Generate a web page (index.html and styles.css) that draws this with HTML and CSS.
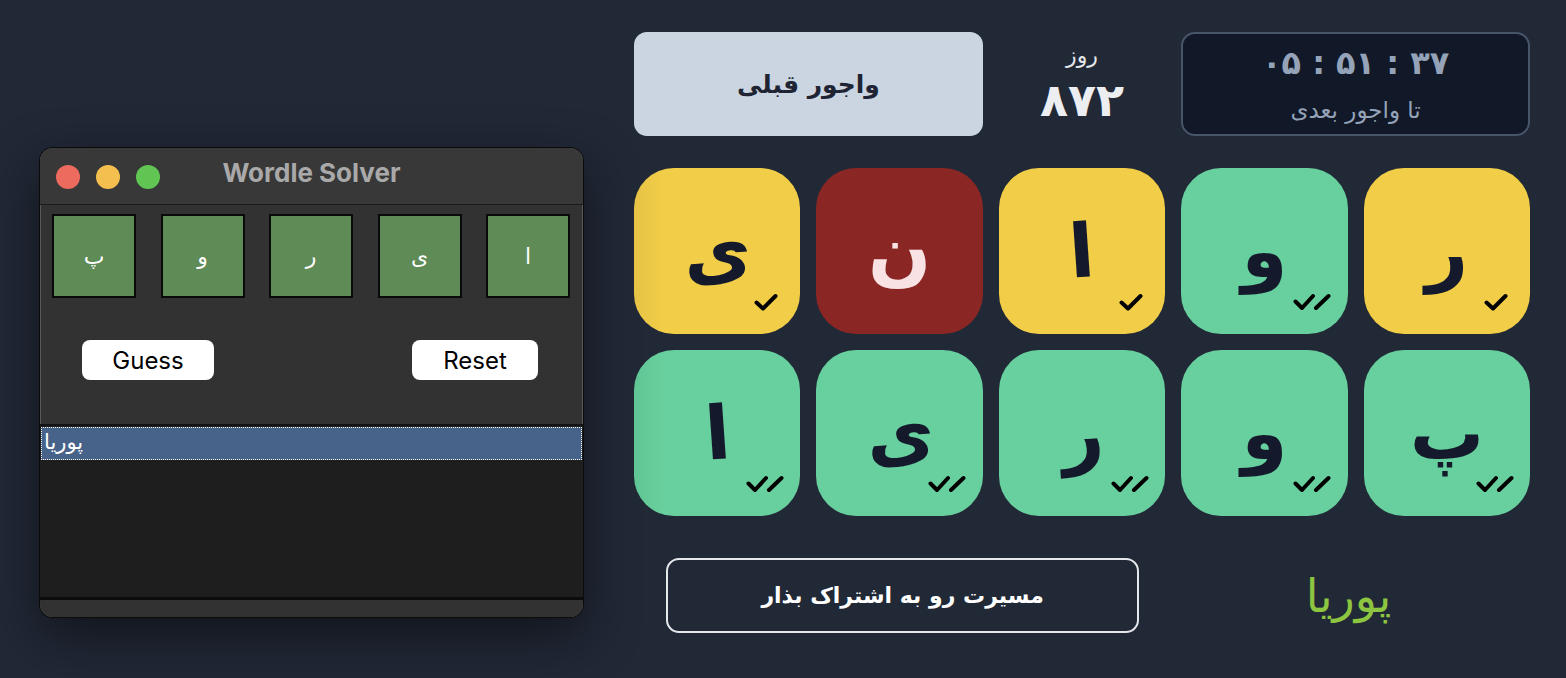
FILE: index.html
```html
<!DOCTYPE html>
<html lang="fa">
<head>
<meta charset="utf-8">
<title>Wordle Solver</title>
<link rel="stylesheet" href="styles.css">
</head>
<body>
<div class="stage">
  <div class="window">
    <div class="titlebar">
      <div class="lights">
        <span class="light red"></span>
        <span class="light yellow"></span>
        <span class="light green"></span>
      </div>
      <div class="wtitle">Wordle Solver</div>
      <div></div>
    </div>
    <div class="wbody">
      <div class="wtiles">
        <div class="wtile">پ</div>
        <div class="wtile">و</div>
        <div class="wtile">ر</div>
        <div class="wtile">ی</div>
        <div class="wtile">ا</div>
      </div>
      <div class="wbuttons">
        <button class="mbtn guess">Guess</button>
        <button class="mbtn reset">Reset</button>
      </div>
    </div>
    <div class="listbox">
      <div class="litem">پوریا</div>
    </div>
    <div class="wfoot"></div>
  </div>

  <div class="panel" dir="rtl">
    <div class="row5 top">
      <div class="timer">
        <div class="clock">۰۵ : ۵۱ : ۳۷</div>
        <div class="tnext">تا واجور بعدی</div>
      </div>
      <div class="day">
        <div class="dlabel">روز</div>
        <div class="dnum">۸۷۲</div>
      </div>
      <button class="prev">واجور قبلی</button>
    </div>

    <div class="board">
      <div class="tile y"><span class="ch">ر</span><svg class="chk one" viewBox="0 0 24 18"><path d="M2.5 9.5 L9 15.5 L21.5 3"/></svg></div>
      <div class="tile g"><span class="ch">و</span><svg class="chk two" viewBox="0 0 38 18"><path d="M2.5 8.5 L9 15 L20 3 M23 15 L35.5 3"/></svg></div>
      <div class="tile y"><span class="ch tilt">ا</span><svg class="chk one" viewBox="0 0 24 18"><path d="M2.5 9.5 L9 15.5 L21.5 3"/></svg></div>
      <div class="tile r"><span class="ch">ن</span></div>
      <div class="tile y flip"><span class="ch tilt">ی</span><svg class="chk one" viewBox="0 0 24 18"><path d="M2.5 9.5 L9 15.5 L21.5 3"/></svg></div>

      <div class="tile g"><span class="ch">پ</span><svg class="chk two" viewBox="0 0 38 18"><path d="M2.5 8.5 L9 15 L20 3 M23 15 L35.5 3"/></svg></div>
      <div class="tile g"><span class="ch">و</span><svg class="chk two" viewBox="0 0 38 18"><path d="M2.5 8.5 L9 15 L20 3 M23 15 L35.5 3"/></svg></div>
      <div class="tile g"><span class="ch tilt">ر</span><svg class="chk two" viewBox="0 0 38 18"><path d="M2.5 8.5 L9 15 L20 3 M23 15 L35.5 3"/></svg></div>
      <div class="tile g"><span class="ch tilt">ی</span><svg class="chk two" viewBox="0 0 38 18"><path d="M2.5 8.5 L9 15 L20 3 M23 15 L35.5 3"/></svg></div>
      <div class="tile g flip"><span class="ch tilt">ا</span><svg class="chk two" viewBox="0 0 38 18"><path d="M2.5 8.5 L9 15 L20 3 M23 15 L35.5 3"/></svg></div>
    </div>

    <div class="row5 bottom">
      <div class="name">پوریا</div>
      <div class="sharecell"><button class="share">مسیرت رو به اشتراک بذار</button></div>
    </div>
  </div>
</div>
</body>
</html>
```

FILE: styles.css
```css
* { box-sizing: border-box; }
html, body { margin: 0; padding: 0; }
body {
  background: #212836;
  width: 1566px;
  height: 678px;
  overflow: hidden;
  font-family: "DejaVu Sans", sans-serif;
}
.stage {
  display: flex;
  align-items: flex-start;
  padding-left: 40px;
  gap: 51px;
}

/* ---------- mac window ---------- */
.window {
  margin-top: 148px;
  width: 543px;
  height: 469px;
  border-radius: 13px;
  background: #323232;
  overflow: hidden;
  box-shadow: 0 0 0 1px #0b0b0b, inset 0 0 0 1px #5a5a5a, 0 18px 50px rgba(0,0,0,0.5);
  display: flex;
  flex-direction: column;
}
.titlebar {
  height: 57px;
  flex: none;
  background: #383838;
  border-bottom: 1px solid #1b1b1b;
  display: grid;
  grid-template-columns: 1fr auto 1fr;
  align-items: center;
}
.lights { display: flex; gap: 16px; padding-left: 16px; padding-top: 1px; }
.light { width: 24px; height: 24px; border-radius: 50%; display: block; }
.light.red { background: #ec6a5e; }
.light.yellow { background: #f4bf4f; }
.light.green { background: #61c554; }
.wtitle {
  font-family: "Inter", "Liberation Sans", sans-serif;
  font-weight: 700;
  font-size: 26px;
  color: #a9a9a9;
  margin-top: -7px;
}
.wbody { padding: 9px 13px 0 12px; flex: none; }
.wtiles { display: flex; justify-content: space-between; }
.wtile {
  width: 84px; height: 84px;
  background: #5e8b56;
  border: 2px solid #0a0a0a;
  display: flex; align-items: center; justify-content: center;
  color: #fff;
  font-size: 22px;
}
.wbuttons {
  display: flex;
  justify-content: space-between;
  padding: 0 32px 0 30px;
  margin-top: 42px;
  margin-bottom: 44px;
}
.mbtn {
  height: 40px;
  border: none;
  border-radius: 8px;
  background: #fff;
  color: #000;
  font-family: "Inter", "Liberation Sans", sans-serif;
  font-size: 24px;
  padding: 0;
}
.mbtn.guess { width: 132px; }
.mbtn.reset { width: 126px; }
.listbox {
  flex: 1;
  background: #1e1e1e;
  border-top: 2px solid #141414;
  border-bottom: 3px solid #0c0c0c;
  padding: 1px 1px 0 1px;
}
.litem {
  height: 33px;
  background: #486389;
  border: 1px dotted #ffffff;
  color: #fff;
  font-size: 21px;
  line-height: 28px;
  padding-left: 2px;
  direction: rtl;
  text-align: left;
}
.wfoot { height: 17px; flex: none; background: #323232; }

/* ---------- game panel ---------- */
.panel { width: 896px; margin-top: 32px; }
.row5 {
  display: grid;
  grid-template-columns: repeat(5, 1fr);
  gap: 16px;
}
.top { height: 104px; }
.timer {
  grid-column: span 2;
  background: #111827;
  border: 2px solid #475569;
  border-radius: 14px;
  display: flex;
  flex-direction: column;
  align-items: center;
  justify-content: center;
  color: #94a3b8;
}
.clock {
  direction: ltr;
  font-size: 32px;
  font-weight: 700;
  line-height: 40px;
}
.tnext { font-size: 23px; line-height: 30px; margin-top: 12px; }
.day {
  display: flex;
  flex-direction: column;
  align-items: center;
  justify-content: center;
  color: #e5e7eb;
}
.dlabel { font-size: 22px; line-height: 28px; margin-bottom: 4px; }
.dnum { font-size: 46px; font-weight: 700; line-height: 52px; color: #eceef2; }
.prev {
  grid-column: span 2;
  border: none;
  border-radius: 13px;
  background: #cbd5e1;
  color: #1e2433;
  font-family: "DejaVu Sans", sans-serif;
  font-size: 25px;
  font-weight: 700;
}

.board {
  margin-top: 32px;
  display: grid;
  grid-template-columns: repeat(5, 1fr);
  grid-auto-rows: 166px;
  gap: 16px;
}
.tile {
  position: relative;
  border-radius: 40px;
  display: flex;
  align-items: center;
  justify-content: center;
  color: #141a2c;
}
.tile.y { background: #f2ce48; }
.tile.g { background: #68d09e; }
.tile.r { background: #8a2724; color: #f8e2e4; }
.tile.flip.y { background: linear-gradient(90deg, #e6c246 0, #f2ce48 30px); }
.tile.flip.g { background: linear-gradient(90deg, #60c594 0, #68d09e 30px); }
.ch {
  font-size: 74px;
  font-weight: 700;
  line-height: 1;
  margin-top: 0;
}
.ch.tilt { transform: rotate(-4deg); }
.chk {
  position: absolute;
  bottom: 23px;
  height: 18px;
  fill: none;
  stroke: #000;
  stroke-width: 4;
  stroke-linecap: round;
  stroke-linejoin: round;
}
.chk.one { width: 24px; left: 120px; }
.chk.two { width: 38px; left: 112px; }

.bottom { margin-top: 42px; height: 75px; }
.name {
  grid-column: span 2;
  display: flex;
  align-items: center;
  justify-content: center;
  color: #8dc540;
  font-size: 46px;
  padding-right: 14px;
}
.sharecell {
  grid-column: span 3;
  display: flex;
  justify-content: center;
  padding-left: 6px;
}
.share {
  width: 473px;
  height: 75px;
  background: transparent;
  border: 2px solid #e5e7eb;
  border-radius: 13px;
  color: #ffffff;
  font-family: "DejaVu Sans", sans-serif;
  font-size: 22px;
  font-weight: 700;
}
```
